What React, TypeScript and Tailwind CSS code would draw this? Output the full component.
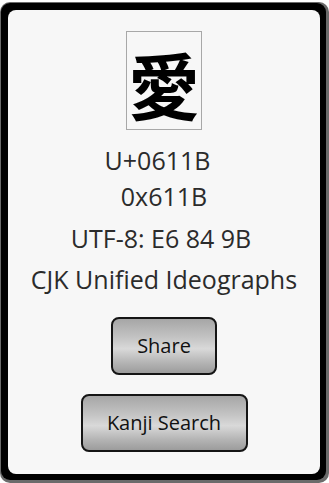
const lines = [
  { text: "U+0611B", className: "pr-[13px]" },
  { text: "0x611B", className: "" },
];

function GlossButton({ label, width }: { label: string; width: string }) {
  return (
    <button
      type="button"
      className={`${width} h-[58px] rounded-[8px] border-2 border-[#151515] bg-[linear-gradient(to_bottom,#a6a6a6_0%,#c4c4c4_35%,#d9d9d9_55%,#b5b5b5_80%,#9c9c9c_100%)] text-[20px] text-[#111] font-['Open_Sans',sans-serif] flex items-center justify-center`}
    >
      {label}
    </button>
  );
}

export default function App() {
  return (
    <div className="w-[329px] h-[483px] bg-white pt-[2px] font-['Open_Sans',sans-serif]">
      <div className="h-[481px] rounded-[10px] bg-[#6b6b6b] pt-[1px] pl-[1px] pr-[3px] pb-[3px]">
        <div className="h-full rounded-[9px] bg-black pt-[7px] pl-[7px] pr-[6px] pb-[6px]">
          <div className="h-full rounded-[8px] bg-[#f7f7f7] flex flex-col items-center pt-[21px] text-[#2b2b2b]">
            <div className="w-[76px] h-[99px] border border-[#a8a8a8] flex items-center justify-center pt-[4px]">
              <span className="text-[72px] leading-none font-bold text-black font-['Noto_Sans_CJK_JP','Noto_Sans_CJK_SC',sans-serif]">
                愛
              </span>
            </div>
            <div className="mt-[12px] flex flex-col items-center text-[25px] leading-[36px]">
              {lines.map((l) => (
                <p key={l.text} className={l.className}>
                  {l.text}
                </p>
              ))}
            </div>
            <p className="mt-[6px] pr-[6px] text-[25px] leading-[36px]">UTF-8: E6 84 9B</p>
            <p className="mt-[5px] text-[25px] leading-[36px]">CJK Unified Ideographs</p>
            <div className="mt-[20px] flex flex-col items-center gap-[19px]">
              <GlossButton label="Share" width="w-[106px]" />
              <GlossButton label="Kanji Search" width="w-[167px]" />
            </div>
          </div>
        </div>
      </div>
    </div>
  );
}
